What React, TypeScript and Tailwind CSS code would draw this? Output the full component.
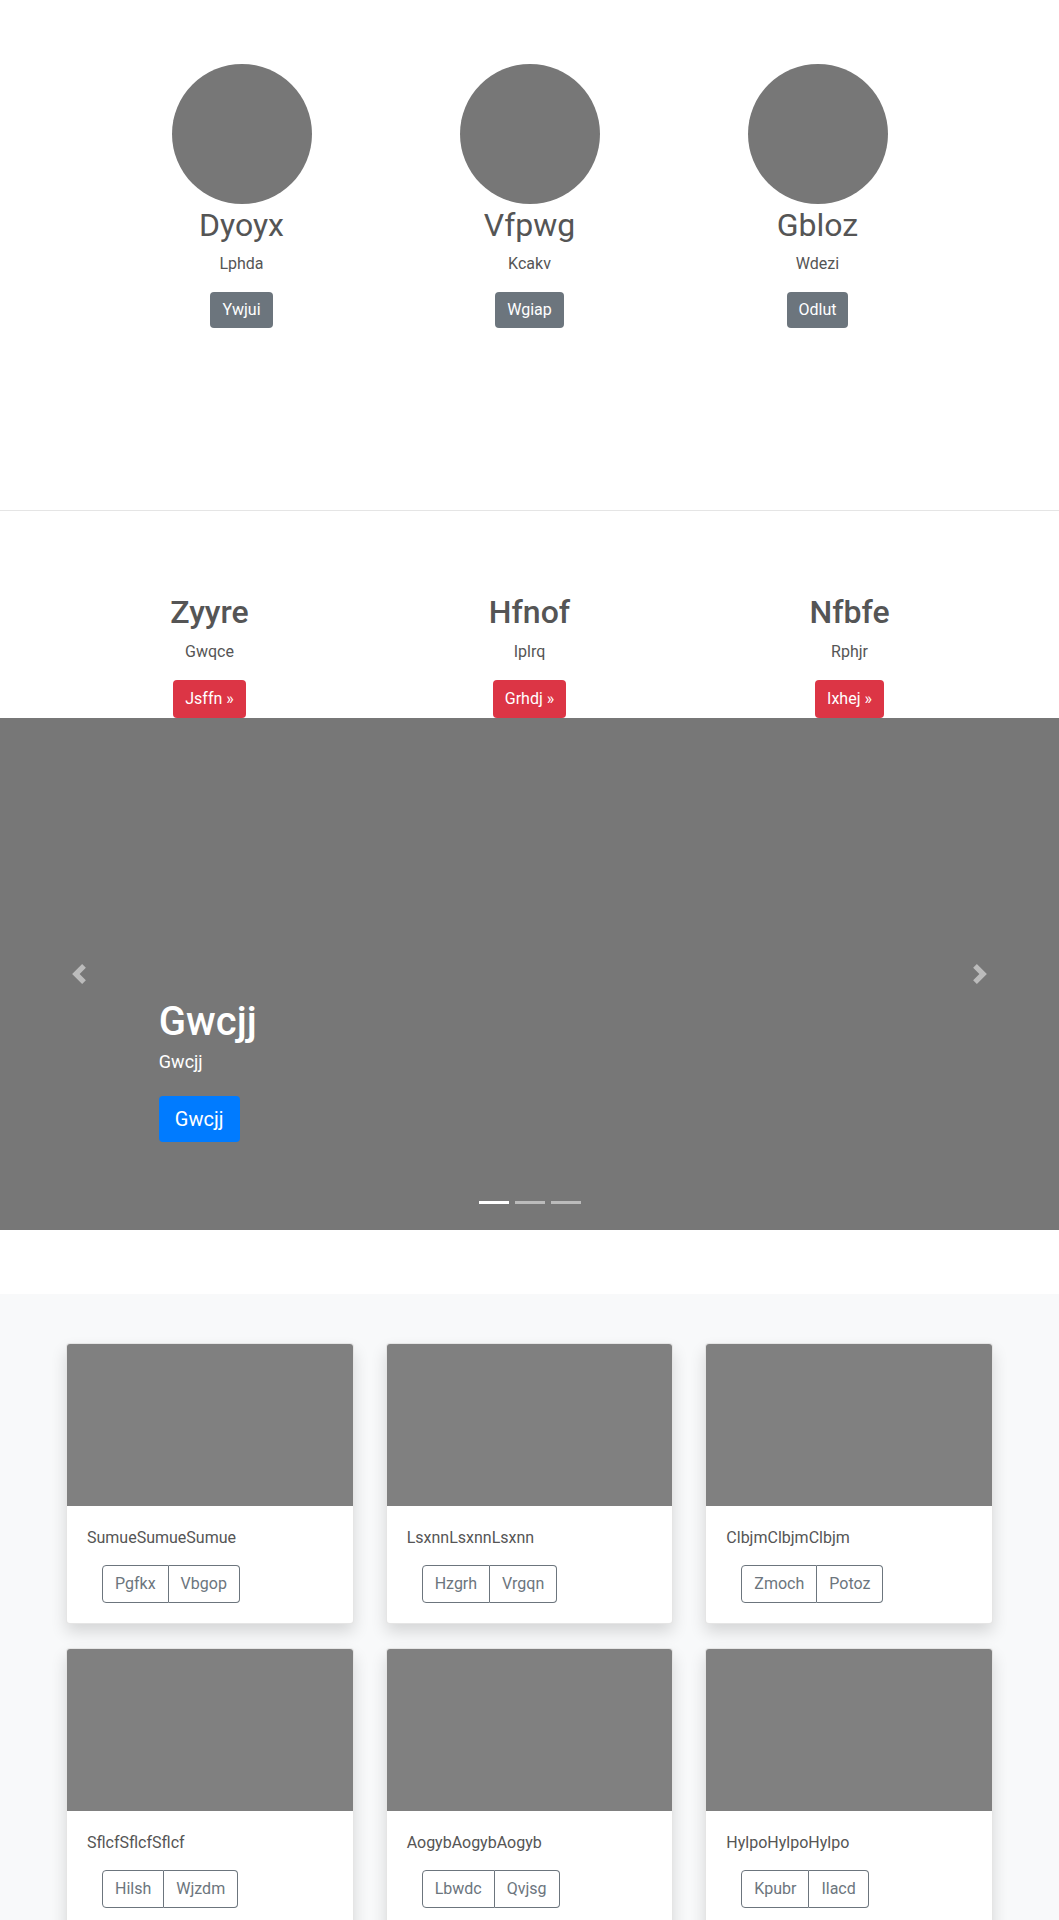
import React from 'react';

const PEOPLE = [
  { name: 'Dyoyx', role: 'Lphda', action: 'Ywjui' },
  { name: 'Vfpwg', role: 'Kcakv', action: 'Wgiap' },
  { name: 'Gbloz', role: 'Wdezi', action: 'Odlut' },
];

const FEATURES = [
  { title: 'Zyyre', text: 'Gwqce', action: 'Jsffn' },
  { title: 'Hfnof', text: 'Iplrq', action: 'Grhdj' },
  { title: 'Nfbfe', text: 'Rphjr', action: 'Ixhej' },
];

const CARDS = [
  { text: 'SumueSumueSumue', a: 'Pgfkx', b: 'Vbgop' },
  { text: 'LsxnnLsxnnLsxnn', a: 'Hzgrh', b: 'Vrgqn' },
  { text: 'ClbjmClbjmClbjm', a: 'Zmoch', b: 'Potoz' },
  { text: 'SflcfSflcfSflcf', a: 'Hilsh', b: 'Wjzdm' },
  { text: 'AogybAogybAogyb', a: 'Lbwdc', b: 'Qvjsg' },
  { text: 'HylpoHylpoHylpo', a: 'Kpubr', b: 'Ilacd' },
];

const App: React.FC = () => {
  return (
    <div className="bg-white font-[Roboto,'Liberation_Sans',Arial,sans-serif] text-[#555]">
      {/* Team section */}
      <section className="pt-[64px]">
        <div className="w-[864px] mx-auto grid grid-cols-3">
          {PEOPLE.map(p => (
            <div key={p.name} className="flex flex-col items-center text-center">
              <div className="w-[140px] h-[140px] rounded-full bg-[#777]" />
              <h2 className="text-[32px] leading-[1.2] font-normal mt-[2px] mb-2">{p.name}</h2>
              <p className="text-base leading-6 mb-4">{p.role}</p>
              <button className="bg-[#6c757d] text-white text-base leading-6 px-3 py-[6px] rounded">
                {p.action}
              </button>
            </div>
          ))}
        </div>
      </section>

      <hr className="mt-[182px] border-0 border-t border-[#e5e5e5]" />

      {/* Features */}
      <section className="pt-[82px]">
        <div className="w-[960px] mx-auto grid grid-cols-3">
          {FEATURES.map(f => (
            <div key={f.title} className="flex flex-col items-center text-center">
              <h2 className="text-[32px] leading-[1.2] font-medium mb-2">{f.title}</h2>
              <p className="text-base leading-6 mb-4">{f.text}</p>
              <button className="bg-[#dc3545] text-white text-base leading-6 px-3 py-[7px] rounded">
                {f.action} &raquo;
              </button>
            </div>
          ))}
        </div>
      </section>

      {/* Carousel */}
      <section className="relative h-[512px] bg-[#777] overflow-hidden">
        <button className="absolute left-0 top-0 bottom-0 w-[15%] flex items-center justify-center opacity-50">
          <svg width="20" height="20" viewBox="0 0 8 8" fill="#fff">
            <path d="M5.25 0l-4 4 4 4 1.5-1.5L4.25 4l2.5-2.5L5.25 0z" />
          </svg>
        </button>
        <button className="absolute right-0 top-0 bottom-0 w-[15%] flex items-center justify-center opacity-50">
          <svg width="20" height="20" viewBox="0 0 8 8" fill="#fff">
            <path d="M2.75 0l-1.5 1.5L3.75 4l-2.5 2.5L2.75 8l4-4-4-4z" />
          </svg>
        </button>

        <div className="absolute left-[15%] right-[15%] bottom-[88px] text-white text-left">
          <h1 className="text-[40px] leading-[1.2] font-medium mb-[2px]">Gwcjj</h1>
          <p className="text-[18px] leading-[1.5] mb-[21px]">Gwcjj</p>
          <button className="bg-[#007bff] text-white text-[20px] leading-[1.5] px-4 py-2 rounded">Gwcjj</button>
        </div>

        <div className="absolute bottom-[26px] left-0 right-0 flex justify-center gap-[6px]">
          <span className="w-[30px] h-[3px] bg-white" />
          <span className="w-[30px] h-[3px] bg-white/50" />
          <span className="w-[30px] h-[3px] bg-white/50" />
        </div>
      </section>

      {/* Album */}
      <section className="mt-[64px] bg-[#f8f9fa] pt-[49px] pb-[48px]">
        <div className="w-[927px] mx-auto grid grid-cols-3 gap-x-[32px] gap-y-[24px]">
          {CARDS.map(c => (
            <div
              key={c.text}
              className="bg-white rounded border border-black/10 overflow-hidden shadow-[0_8px_16px_rgba(0,0,0,0.14)]"
            >
              <div className="h-[162px] bg-[#808080]" />
              <div className="px-5 pt-5 pb-5">
                <p className="text-base leading-6 mb-[15px]">{c.text}</p>
                <div className="ml-[15px] inline-flex text-[#6c757d] text-base leading-6">
                  <button className="border border-[#6c757d] rounded-l px-3 py-[6px]">{c.a}</button>
                  <button className="border border-l-0 border-[#6c757d] rounded-r px-3 py-[6px]">{c.b}</button>
                </div>
              </div>
            </div>
          ))}
        </div>
      </section>
    </div>
  );
};

export default App;
